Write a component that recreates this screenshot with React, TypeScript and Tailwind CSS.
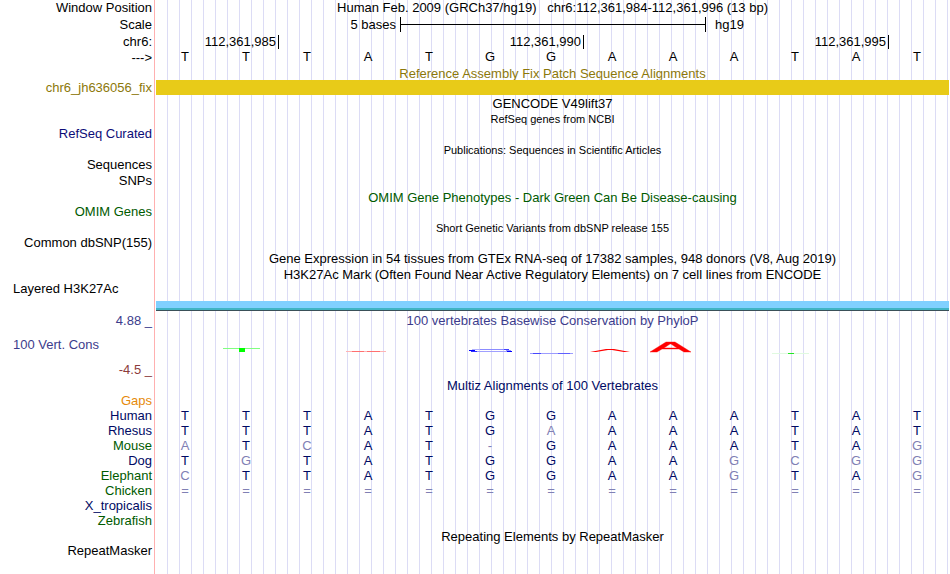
import type { ReactNode } from "react";
import clsx from "clsx";

const BASES = "TTTATGGAAATAT".split("");

interface Species {
  name: string;
  color: string;
  seq: string;
}

const NAVY = "text-[#000a64]";
const GREEN = "text-[#005a00]";

// Bases that differ from the human row are drawn in a lighter shade
const SPECIES: Species[] = [
  { name: "Gaps", color: "text-[#e68a0a]", seq: "" },
  { name: "Human", color: NAVY, seq: "TTTATGGAAATAT" },
  { name: "Rhesus", color: NAVY, seq: "TTTATGAAAATAT" },
  { name: "Mouse", color: GREEN, seq: "ATCAT-GAAATAG" },
  { name: "Dog", color: NAVY, seq: "TGTATGGAAGCGG" },
  { name: "Elephant", color: GREEN, seq: "CTTATGGAAGTAG" },
  { name: "Chicken", color: GREEN, seq: "=============" },
  { name: "X_tropicalis", color: NAVY, seq: "" },
  { name: "Zebrafish", color: GREEN, seq: "" },
];

interface RowProps {
  label?: string;
  height?: string;
  labelClass?: string;
  children?: ReactNode;
}

function Row({ label, height = "h-4 leading-4", labelClass = "text-right", children }: RowProps) {
  return (
    <div className={clsx("flex", height)}>
      <div className={clsx("w-[156px] shrink-0 pr-1 whitespace-pre", labelClass)}>{label}</div>
      <div className="flex-1 min-w-0 text-center whitespace-pre">{children}</div>
    </div>
  );
}

function ScaleBar() {
  return (
    <div className="grid grid-cols-13 h-full">
      <div className="col-span-4 text-right pr-1">5 bases</div>
      <div className="col-span-5 border-l border-black flex items-center my-px">
        <div className="w-full h-px bg-black" />
      </div>
      <div className="col-span-4 border-l border-black pl-[9px] text-left my-px leading-[15px]">hg19</div>
    </div>
  );
}

function Ruler() {
  return (
    <div className="grid grid-cols-13 h-full py-0.5 text-right leading-[14px]">
      <div className="col-span-2 pr-0.5">112,361,985</div>
      <div className="col-span-5 border-l border-black pr-0.5">112,361,990</div>
      <div className="col-span-5 border-l border-black pr-0.5">112,361,995</div>
      <div className="border-l border-black" />
    </div>
  );
}

function ConservationLogo() {
  return (
    <svg viewBox="156 328 793 50" preserveAspectRatio="none" className="block w-full h-full">
      <rect x="223" y="348" width="37" height="1" fill="#80ff80" />
      <rect x="239" y="348" width="6" height="4" fill="#00ff00" />

      <rect x="346" y="351" width="40" height="1" fill="#ffb4b4" />
      <rect x="352" y="351" width="12" height="1" fill="#ff7070" />
      <rect x="367" y="351" width="13" height="1" fill="#ff7070" />

      <rect x="475" y="349" width="34" height="1" fill="#8c8cff" />
      <rect x="472" y="349" width="8" height="1" fill="#b0b0ff" />
      <rect x="504" y="349" width="5" height="1" fill="#4040ff" />
      <rect x="469" y="350" width="6" height="1" fill="#0000ff" />
      <rect x="471" y="351" width="38" height="1" fill="#a0a0ff" />
      <rect x="471" y="351" width="6" height="1" fill="#3030ff" />
      <rect x="506" y="350" width="5" height="1" fill="#9090ff" />
      <rect x="507" y="351" width="5" height="1" fill="#0000ff" />

      <rect x="530" y="353" width="43" height="1" fill="#9c9cff" />
      <rect x="533" y="353" width="8" height="1" fill="#4848ff" />
      <rect x="558" y="353" width="12" height="1" fill="#6060ff" />

      <path
        d="M590 352 L606 349 L614 349 L630 352 L624 352 L612 350 L608 350 L596 352 Z"
        fill="#ff0000"
      />

      <path
        d="M650 352 L666 342 L675 342 L691 352 L684 352 L679 349 L662 349 L657 352 Z M664 348 L677 348 L671 344 L670 344 Z"
        fill="#ff0000"
        stroke="#ff0000"
        strokeWidth="0.4"
        fillRule="evenodd"
      />

      <rect x="772" y="353" width="37" height="1" fill="#e0fae0" />
      <rect x="788" y="353" width="6" height="1" fill="#20e820" />
    </svg>
  );
}

function AlignmentTable() {
  return (
    <table className="w-full table-fixed border-collapse">
      <tbody>
        {SPECIES.map((species) => (
          <tr key={species.name} className="h-[15px] leading-[15px]">
            <th scope="row" className={clsx("w-[156px] p-0 pr-1 text-right font-normal", species.color)}>
              {species.name}
            </th>
            {BASES.map((base, i) => {
              const letter = species.seq[i] ?? "";
              return (
                <td
                  key={i}
                  className={clsx("p-0 pr-[3px] text-center", letter === base ? NAVY : "text-[#8080b4]")}
                >
                  {letter}
                </td>
              );
            })}
          </tr>
        ))}
      </tbody>
    </table>
  );
}

export default function App() {
  return (
    <main className="min-h-screen pr-px bg-white bg-[linear-gradient(to_right,white_154px,#ffb0b0_154px,#ffb0b0_155px,white_155px,white_156px,transparent_156px),repeating-linear-gradient(to_right,transparent_0px,transparent_11px,#dcdcf5_11px,#dcdcf5_12px)] font-['Liberation_Sans',Arial,sans-serif] text-[13px] text-black">
      <Row label="Window Position">
        {"Human Feb. 2009 (GRCh37/hg19)   chr6:112,361,984-112,361,996 (13 bp)"}
      </Row>
      <Row label="Scale" height="h-[17px] leading-[17px]">
        <ScaleBar />
      </Row>
      <Row label="chr6:" height="h-[17px] leading-[17px]">
        <Ruler />
      </Row>
      <Row label="--->" height="h-[15px] leading-[15px]">
        <div className="grid grid-cols-13 leading-[13px]">
          {BASES.map((base, i) => (
            <span key={i} className="pr-[3px]">{base}</span>
          ))}
        </div>
      </Row>

      {/* Fix patches */}
      <Row height="h-[15px] leading-[17px]">
        <span className="text-[#8c780a]">Reference Assembly Fix Patch Sequence Alignments</span>
      </Row>
      <Row label="chr6_jh636056_fix" labelClass="text-right text-[#8c780a]" height="h-[15px] leading-[15px]">
        <div className="relative h-full bg-[#e8cb18]" />
      </Row>

      {/* Genes and literature */}
      <Row height="h-4 leading-[18px]">GENCODE V49lift37</Row>
      <Row height="h-[15px] leading-[15px]">
        <span className="text-[11px]">RefSeq genes from NCBI</span>
      </Row>
      <Row label="RefSeq Curated" labelClass="text-right text-[#0c0c78]" height="h-[15px] leading-[15px]" />
      <Row height="h-4 leading-[18px]">
        <span className="text-[11px]">Publications: Sequences in Scientific Articles</span>
      </Row>
      <Row label="Sequences" />
      <Row label="SNPs" />

      {/* Variants */}
      <Row height="h-4 leading-[18px]">
        <span className={GREEN}>OMIM Gene Phenotypes - Dark Green Can Be Disease-causing</span>
      </Row>
      <Row label="OMIM Genes" labelClass={`text-right ${GREEN}`} height="h-[15px] leading-[13px]" />
      <Row>
        <span className="text-[11px]">Short Genetic Variants from dbSNP release 155</span>
      </Row>
      <Row label="Common dbSNP(155)" height="h-[15px] leading-[13px]" />

      {/* Expression and regulation */}
      <Row>Gene Expression in 54 tissues from GTEx RNA-seq of 17382 samples, 948 donors (V8, Aug 2019)</Row>
      <Row height="h-[15px] leading-[15px]">
        H3K27Ac Mark (Often Found Near Active Regulatory Elements) on 7 cell lines from ENCODE
      </Row>
      <Row label="Layered H3K27Ac" labelClass="text-left pl-[13px]" height="h-[15px] leading-[13px]" />
      <Row>
        <div className="pt-1">
          <div className="h-[7px] bg-[#80d0ff]" />
          <div className="h-0.5 bg-[#40b4c4]" />
          <div className="h-px bg-[#3a5058]" />
        </div>
      </Row>

      {/* Conservation */}
      <Row label="4.88 _" labelClass="text-right text-[#3c3c8c]" height="h-[15px] leading-[15px]">
        <span className="text-[#3c3c8c]">100 vertebrates Basewise Conservation by PhyloP</span>
      </Row>
      <div className="flex h-[50px]">
        <div className="w-[156px] shrink-0 pl-[13px] pr-1 pt-[9px] flex flex-col gap-2.5 leading-[15px]">
          <span className="text-[#3c3c8c]">100 Vert. Cons</span>
          <span className="text-right text-[#8c3c3c]">-4.5 _</span>
        </div>
        <div className="flex-1 min-w-0">
          <ConservationLogo />
        </div>
      </div>
      <Row height="h-[15px] leading-[15px]">
        <span className={NAVY}>Multiz Alignments of 100 Vertebrates</span>
      </Row>
      <AlignmentTable />

      {/* Repeats */}
      <Row height="h-4 leading-[18px]">Repeating Elements by RepeatMasker</Row>
      <Row label="RepeatMasker" height="h-[15px] leading-[13px]" />
    </main>
  );
}
